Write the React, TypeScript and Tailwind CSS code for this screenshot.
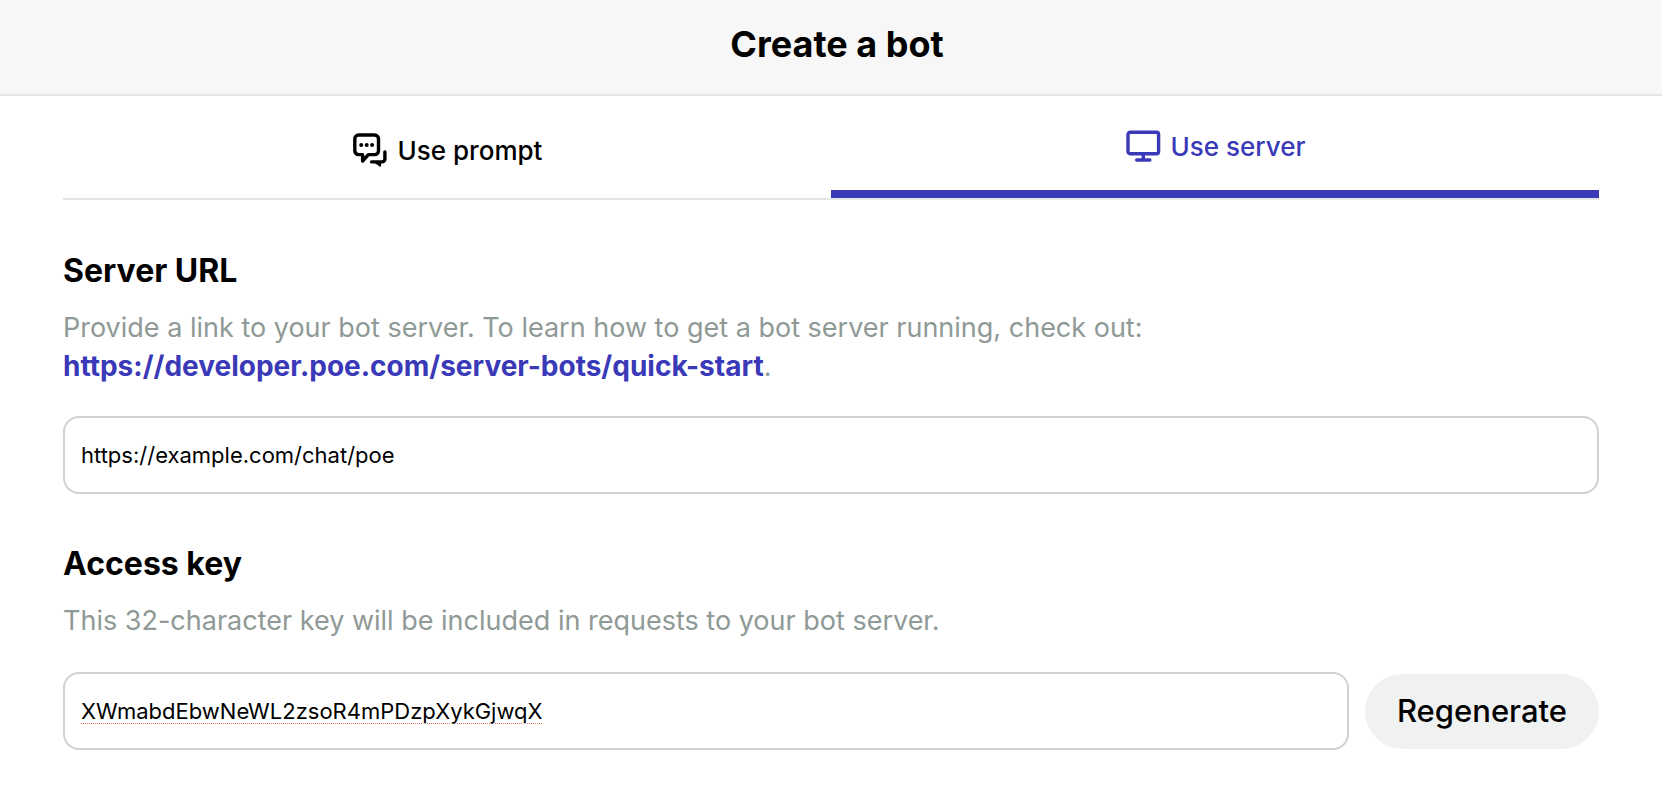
import { useState } from "react";

function ChatIcon() {
  return (
    <svg
      width="36"
      height="36"
      viewBox="0 0 36 36"
      fill="none"
      stroke="currentColor"
      strokeWidth="3.4"
      strokeLinecap="round"
      strokeLinejoin="round"
      aria-hidden="true"
    >
      <path d="M6.6 3H22.7a3.8 3.8 0 0 1 3.8 3.8V18.8a3.8 3.8 0 0 1-3.8 3.8H16.4L10.6 29V22.6H6.6a3.8 3.8 0 0 1-3.8-3.8V6.8A3.8 3.8 0 0 1 6.6 3Z" />
      <path d="M32.9 20V27a2.9 2.9 0 0 1-2.9 2.9H19.6" />
      <path d="M23.2 30.2h5v3.6Z" fill="currentColor" strokeWidth="1.8" />
      <g fill="currentColor" stroke="none">
        <circle cx="9.2" cy="13" r="2" />
        <circle cx="14.7" cy="13" r="2" />
        <circle cx="20.1" cy="13" r="2" />
      </g>
    </svg>
  );
}

function MonitorIcon() {
  return (
    <svg
      width="36"
      height="36"
      viewBox="0 0 36 36"
      fill="none"
      stroke="currentColor"
      strokeWidth="3.4"
      strokeLinecap="round"
      strokeLinejoin="round"
      aria-hidden="true"
    >
      <rect x="3" y="4.3" width="30.6" height="21.4" rx="2.2" />
      <path d="M18.3 25.7v6M11.7 32h13.2" />
    </svg>
  );
}

const tabs = [
  { id: "prompt", label: "Use prompt", Icon: ChatIcon },
  { id: "server", label: "Use server", Icon: MonitorIcon },
];

export default function App() {
  const [active, setActive] = useState("server");
  const [url, setUrl] = useState("https://example.com/chat/poe");
  const [key, setKey] = useState("XWmabdEbwNeWL2zsoR4mPDzpXykGjwqX");

  return (
    <div className="min-h-screen bg-white font-[Inter,sans-serif] text-black">
      <header className="flex h-24 items-center justify-center border-b-2 border-[#e2e7e6] bg-[#f7f7f7] pb-1.5 pl-3">
        <h1 className="text-4xl font-bold">Create a bot</h1>
      </header>

      <main className="px-[63px]">
        <div role="tablist" className="grid grid-cols-2 border-b-2 border-[#e2e7e6]">
          {tabs.map(({ id, label, Icon }) => (
            <button
              key={id}
              type="button"
              role="tab"
              aria-selected={active === id}
              onClick={() => setActive(id)}
              className={
                "flex h-[102px] items-center justify-center gap-2.5 pt-1.5 text-[26px] font-medium " +
                (active === id ? "border-b-8 border-[#3a39b8] text-[#3a39b8]" : "")
              }
            >
              <Icon />
              {label}
            </button>
          ))}
        </div>

        <section className="mt-[49px]">
          <label htmlFor="server-url" className="block text-[32px] leading-[44px] font-bold">
            Server URL
          </label>
          <p className="mt-4 text-[27px] leading-[38px] text-[#8f9996]">
            Provide a link to your bot server. To learn how to get a bot server running, check out:
            <br />
            <a
              href="https://developer.poe.com/server-bots/quick-start"
              className="text-[28px] font-bold text-[#3a39b8]"
            >
              https://developer.poe.com/server-bots/quick-start
            </a>
            .
          </p>
          <input
            id="server-url"
            type="text"
            value={url}
            onChange={(e) => setUrl(e.target.value)}
            className="mt-[30px] block h-[78px] w-full rounded-2xl border-2 border-[#cdd3d2] px-4 text-[22px]"
          />
        </section>

        <section className="mt-12">
          <label htmlFor="access-key" className="block text-[32px] leading-[44px] font-bold">
            Access key
          </label>
          <p className="mt-4 text-[27px] leading-[38px] text-[#8f9996]">
            This 32-character key will be included in requests to your bot server.
          </p>
          <div className="mt-8 flex items-center gap-4">
            <input
              id="access-key"
              type="text"
              spellCheck={false}
              value={key}
              onChange={(e) => setKey(e.target.value)}
              className="h-[78px] min-w-0 flex-1 rounded-2xl border-2 border-[#cdd3d2] px-4 text-[22px] underline decoration-[#e8695f] decoration-dotted decoration-1 underline-offset-4"
            />
            <button type="button" className="h-[75px] rounded-full bg-[#f0f2f2] px-8 text-[31px] font-medium">
              Regenerate
            </button>
          </div>
        </section>
      </main>
    </div>
  );
}
